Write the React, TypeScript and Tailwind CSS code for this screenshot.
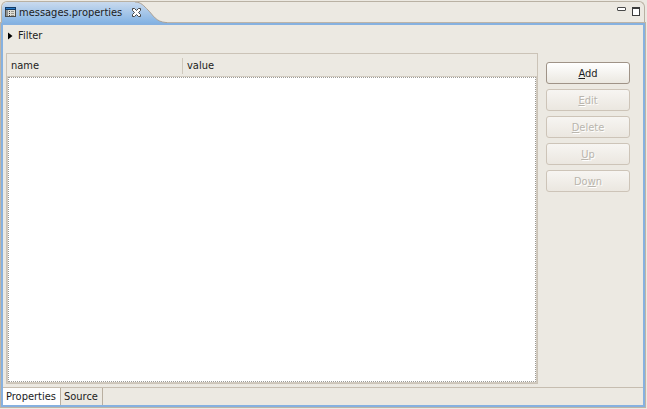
import { useState } from "react"

const actions = [
  { before: "", key: "A", after: "dd", enabled: true },
  { before: "", key: "E", after: "dit", enabled: false },
  { before: "", key: "D", after: "elete", enabled: false },
  { before: "", key: "U", after: "p", enabled: false },
  { before: "Do", key: "w", after: "n", enabled: false },
]

function FileIcon() {
  return (
    <svg width="11" height="11" viewBox="0 0 11 11" shapeRendering="crispEdges" aria-hidden="true">
      <rect x="0.5" y="0.5" width="10" height="9" fill="#dfddd5" stroke="#4c4b48" />
      <rect x="0" y="0" width="11" height="3" fill="#123a66" />
      <rect x="1" y="1" width="9" height="1" fill="#2b7dc9" />
      <rect x="1" y="3" width="2" height="6" fill="#8f9291" />
      <path d="M4 4.5h1M4 6.5h1M4 8.5h1" stroke="#444" />
      <path d="M6 4.5h3M6 6.5h3M6 8.5h3" stroke="#9a978d" />
    </svg>
  )
}

function CloseIcon() {
  return (
    <svg width="9" height="9" viewBox="0 0 9 9" aria-hidden="true">
      <path d="M0.5 0.5h2l2 2 2-2h2v2l-2 2 2 2v2h-2l-2-2-2 2h-2v-2l2-2-2-2z" fill="#fff" stroke="#444" />
    </svg>
  )
}

function TitleBar() {
  return (
    <header className="flex h-[22px] justify-between rounded-t-md border-x border-t border-[#b9b1a3]">
      <div className="relative flex items-center overflow-hidden rounded-tl-md bg-linear-to-b from-[#c9daee] to-[#84b3e3] pr-[26px] pl-[3px]">
        <svg className="absolute top-0 right-0" width="34" height="21" viewBox="0 0 34 21" aria-hidden="true">
          <path d="M2 0C8 0 11 4 15 8C20 13 23 20 33 20.5H34V0Z" fill="#ece9e2" />
          <path d="M2 0C8 0 11 4 15 8C20 13 23 20 33 20.5H34" fill="none" stroke="#aaa196" />
        </svg>
        <FileIcon />
        <span className="ml-[3px]">messages.properties</span>
        <button type="button" aria-label="Close" className="relative ml-[10px]">
          <CloseIcon />
        </button>
      </div>
      <div className="flex flex-1 items-start justify-end gap-[6px] border-b border-[#aaa196] pt-1 pr-1">
        <button type="button" aria-label="Minimize" className="mt-px">
          <svg width="9" height="4" viewBox="0 0 9 4" aria-hidden="true">
            <rect x="0.5" y="0.5" width="8" height="3" rx="0.5" fill="#fff" stroke="#4a4a4a" />
          </svg>
        </button>
        <button type="button" aria-label="Maximize" className="mt-px">
          <svg width="8" height="9" viewBox="0 0 8 9" aria-hidden="true">
            <rect x="0.5" y="0.5" width="7" height="8" fill="#fff" stroke="#3c3c3c" />
            <path d="M0 1.5h8" stroke="#3c3c3c" />
          </svg>
        </button>
      </div>
    </header>
  )
}

function PropertyTable() {
  return (
    <div className="flex flex-1 flex-col border border-[#cbc3b7] p-px pt-0">
      <table className="w-full table-fixed border-collapse text-left">
        <thead>
          <tr className="h-[23px]">
            <th className="w-[174px] px-[3px] font-normal">name</th>
            <th className="px-0 font-normal">
              <div className="border-l border-[#cfc8bc] pl-1">value</div>
            </th>
          </tr>
        </thead>
        <tbody></tbody>
      </table>
      <div className="flex-1 border border-dotted border-[#9c9b97] bg-white outline outline-[#d2cbc0]"></div>
    </div>
  )
}

export default function App() {
  const [page, setPage] = useState("Properties")

  return (
    <div className="flex min-h-screen flex-col bg-[#ece9e2] pt-px pr-[2px] pb-[2px] pl-px font-['DejaVu_Sans_Condensed','DejaVu_Sans',sans-serif] text-[11px] leading-4 text-[#1c1c1c]">
      <TitleBar />
      <main className="flex flex-1 flex-col border-2 border-[#86b1e0] outline outline-[#bdb4a7]">
        <button type="button" className="mt-[3px] ml-[5px] flex items-center gap-[5px] self-start">
          <svg width="5" height="8" viewBox="0 0 5 8" aria-hidden="true">
            <path d="M0 0.5L4.5 4L0 7.5Z" fill="#000" />
          </svg>
          Filter
        </button>
        <div className="mt-[9px] flex flex-1 gap-2 pr-[13px] pl-[3px]">
          <PropertyTable />
          <div className="flex w-[84px] flex-col gap-[5px] pt-[9px]">
            {actions.map((a) => (
              <button
                key={a.key}
                type="button"
                disabled={!a.enabled}
                className="h-[22px] rounded-[3px] border border-[#9f9387] bg-linear-to-b from-white to-[#ebe8e1] pt-px text-[#1c1c1c] disabled:border-[#cdc4b8] disabled:from-[#f7f5f2] disabled:to-[#ebe7e0] disabled:text-[#b9b5ad] disabled:[text-shadow:1px_1px_0_white]"
              >
                {a.before}
                <span className="underline underline-offset-1">{a.key}</span>
                {a.after}
              </button>
            ))}
          </div>
        </div>
        <nav className="mt-[3px] flex h-[18px] border-t border-[#c6bdb0]">
          {["Properties", "Source"].map((name) => (
            <button
              key={name}
              type="button"
              onClick={() => setPage(name)}
              className={`border-r border-[#b9afa0] pr-1 pl-[3px] ${page === name ? "bg-white" : ""}`}
            >
              {name}
            </button>
          ))}
        </nav>
      </main>
    </div>
  )
}
